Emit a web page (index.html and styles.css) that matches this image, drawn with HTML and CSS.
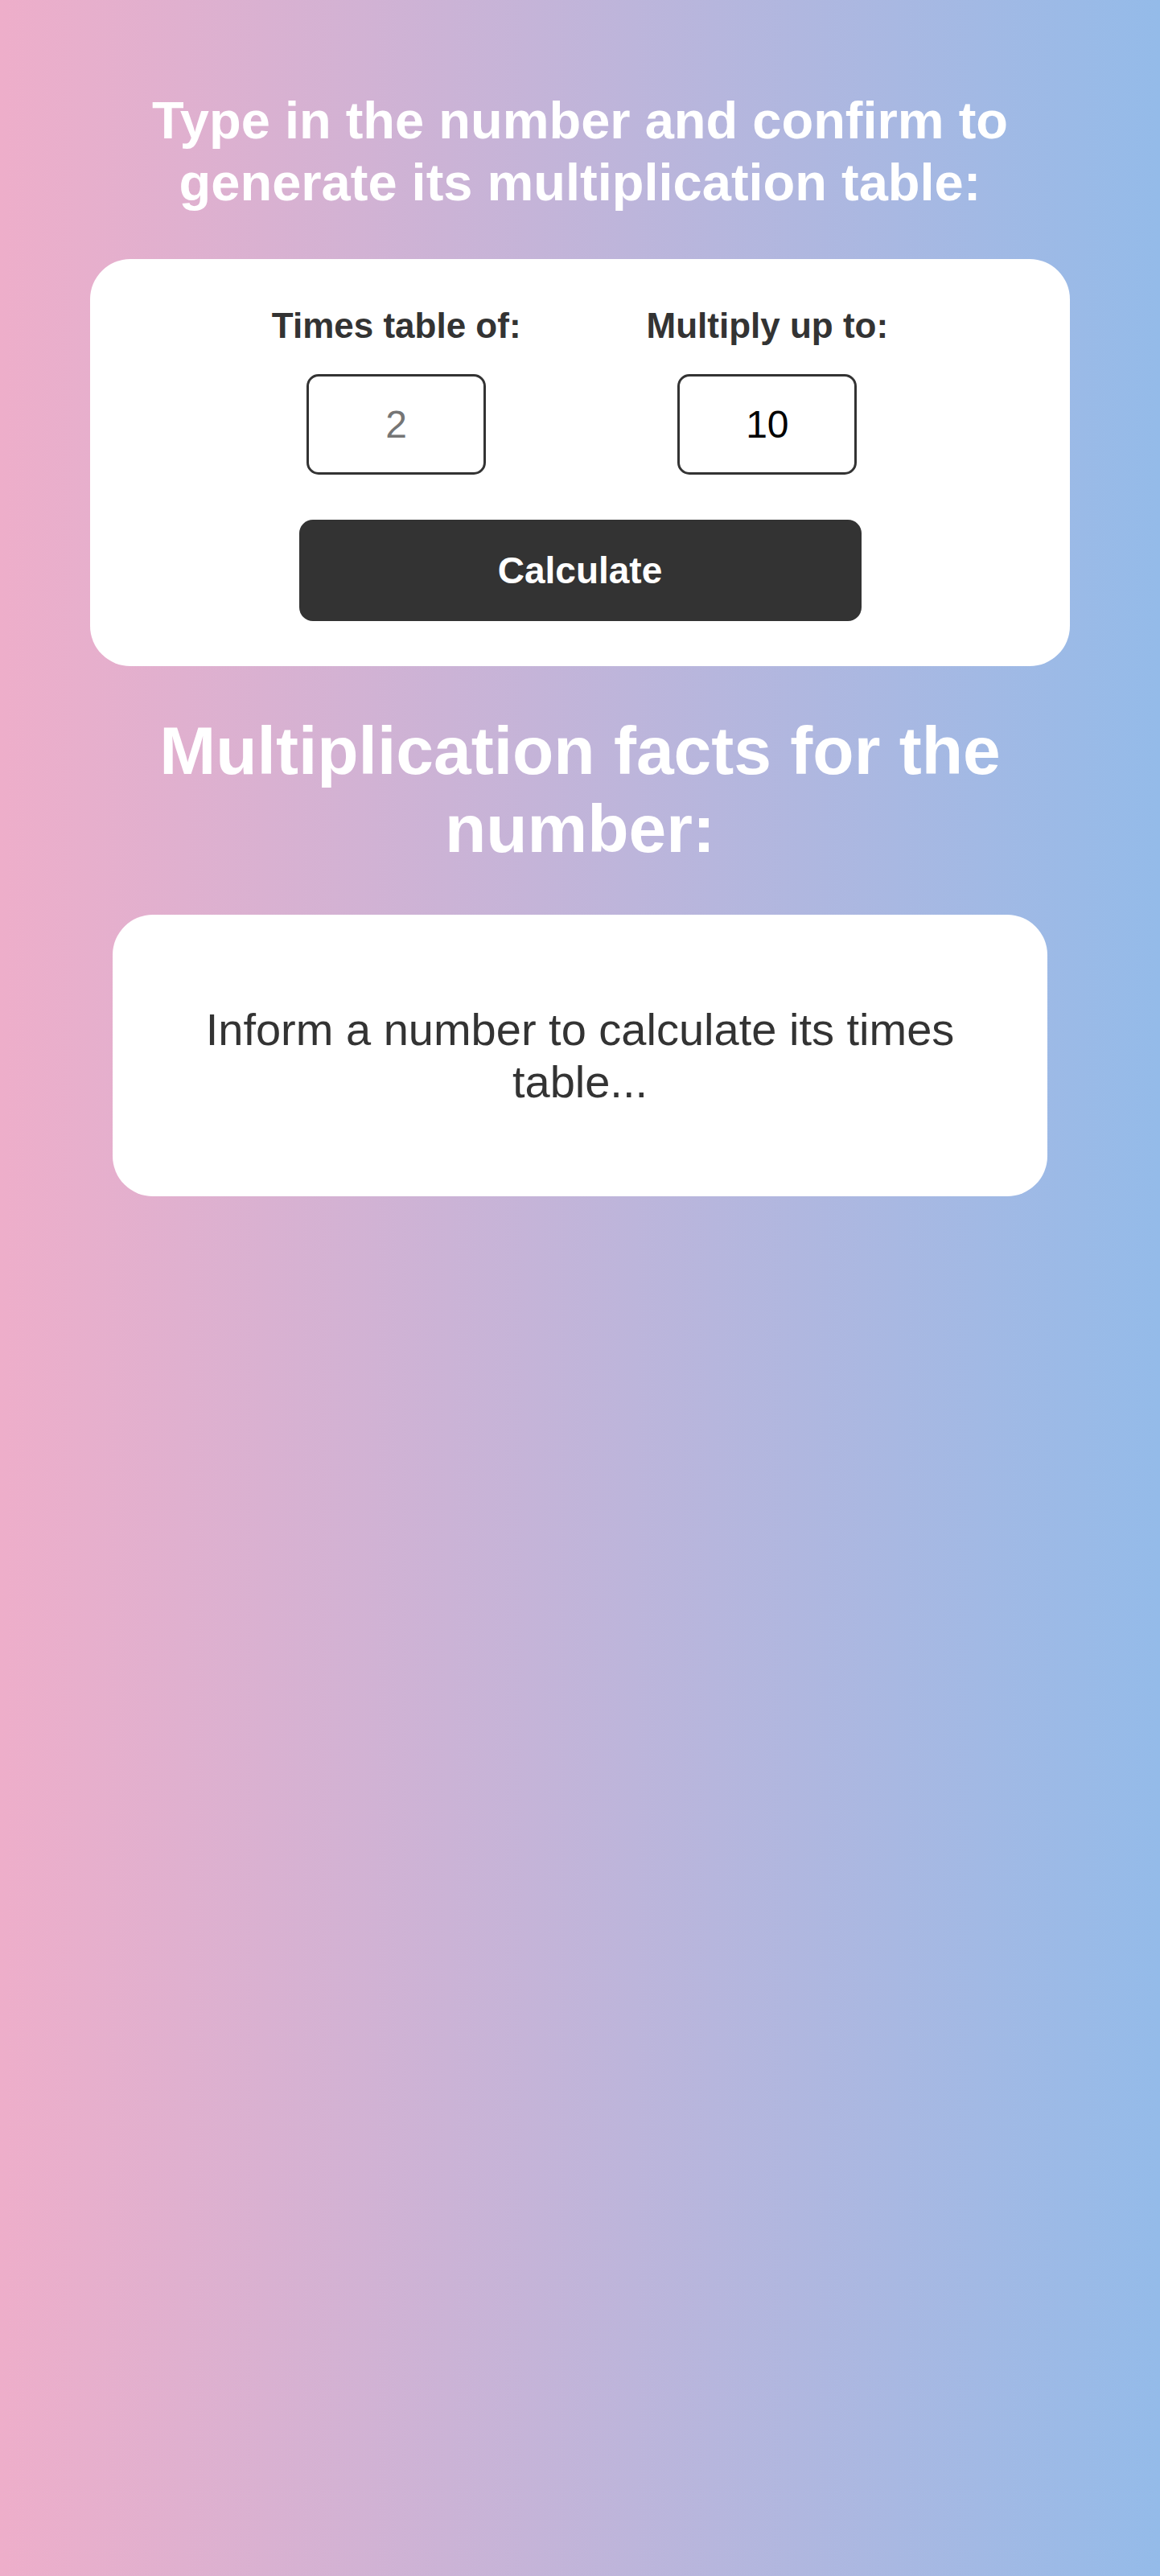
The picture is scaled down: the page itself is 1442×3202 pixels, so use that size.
FILE: index.html
```html
<!DOCTYPE html>
<html lang="en">
<head>
<meta charset="UTF-8">
<title>Multiplication Table</title>
<link rel="stylesheet" href="styles.css">
</head>
<body>
<main class="page">
  <h1 class="title">Type in the number and confirm to generate its multiplication table:</h1>
  <section class="form-card">
    <div class="fields">
      <div class="field">
        <label class="field-label" for="num">Times table of:</label>
        <input class="field-input" id="num" type="number" placeholder="2">
      </div>
      <div class="field">
        <label class="field-label" for="upto">Multiply up to:</label>
        <input class="field-input" id="upto" type="number" value="10">
      </div>
    </div>
    <button class="calc-btn" type="button">Calculate</button>
  </section>
  <h2 class="subtitle">Multiplication facts for the number:</h2>
  <section class="result-card">
    <p class="result-text">Inform a number to calculate its times table...</p>
  </section>
</main>
</body>
</html>
```
FILE: styles.css
```css
html {
  min-height: 100%;
  background: linear-gradient(90deg, rgb(238, 174, 202) 0%, rgb(148, 187, 233) 100%);
}

body {
  margin: 0;
  min-height: 100vh;
  font-family: "Liberation Sans", Arial, sans-serif;
  background: linear-gradient(90deg, rgb(238, 174, 202) 0%, rgb(148, 187, 233) 100%);
}

.page {
  width: 1218px;
  margin: 0 auto;
  padding-top: 111px;
}

.title {
  margin: 0 0 57px;
  font-size: 65px;
  font-weight: bold;
  line-height: 77px;
  color: #fff;
  text-align: center;
}

.form-card {
  background: #fff;
  border-radius: 50px;
  padding: 58px 0 56px;
  display: flex;
  flex-direction: column;
  align-items: center;
}

.fields {
  display: flex;
  justify-content: center;
  gap: 156px;
}

.field {
  display: flex;
  flex-direction: column;
  align-items: center;
}

.field-label {
  font-size: 44px;
  font-weight: bold;
  line-height: normal;
  color: #333;
  margin-bottom: 35px;
}

.field-input {
  box-sizing: border-box;
  width: 223px;
  height: 125px;
  border: 3px solid #333;
  border-radius: 15px;
  font-family: "Liberation Sans", Arial, sans-serif;
  font-size: 48px;
  text-align: center;
  color: #000;
  background: #fff;
  padding: 0;
  -moz-appearance: textfield;
}

.field-input::placeholder {
  color: #757575;
}

.field-input::-webkit-outer-spin-button,
.field-input::-webkit-inner-spin-button {
  -webkit-appearance: none;
  margin: 0;
}

.calc-btn {
  margin-top: 56px;
  width: 699px;
  height: 126px;
  border: none;
  border-radius: 17px;
  background: #333;
  color: #fff;
  font-family: "Liberation Sans", Arial, sans-serif;
  font-size: 46px;
  font-weight: bold;
  cursor: pointer;
}

.subtitle {
  margin: 57px 0 58px;
  font-size: 84px;
  font-weight: bold;
  line-height: normal;
  color: #fff;
  text-align: center;
}

.result-card {
  width: 1162px;
  box-sizing: border-box;
  margin: 0 auto;
  background: #fff;
  border-radius: 50px;
  padding: 110px 80px;
}

.result-text {
  margin: 0;
  font-size: 56px;
  line-height: normal;
  color: #333;
  text-align: center;
}
```
